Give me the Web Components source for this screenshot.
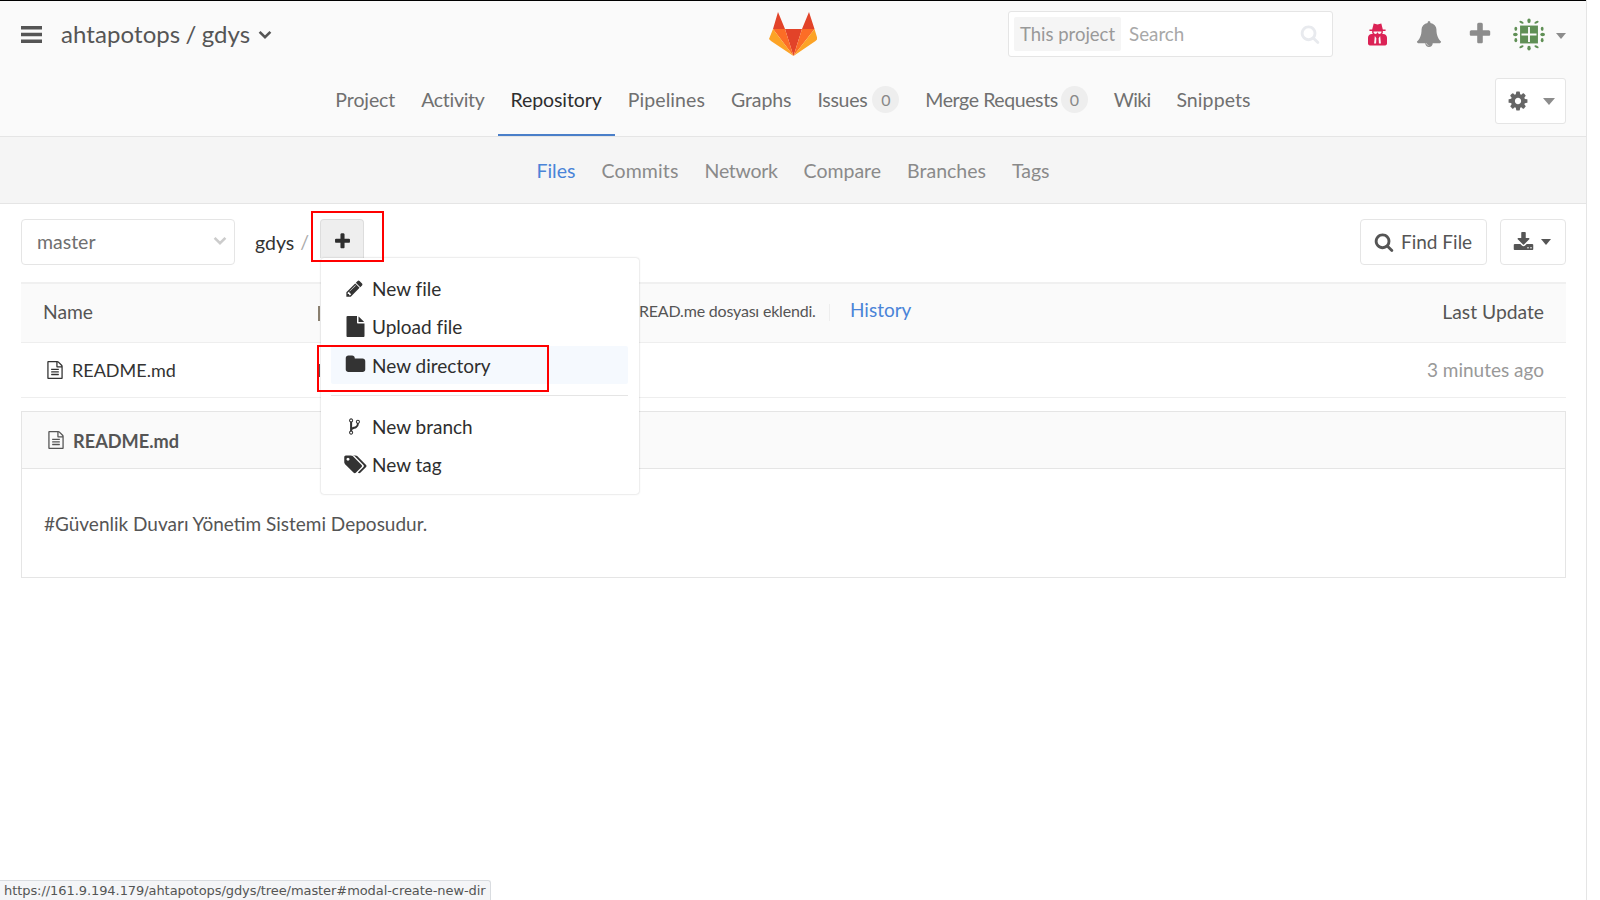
<!DOCTYPE html>
<html lang="tr"><head><meta charset="utf-8"><title>gdys</title>
<style>
html,body{margin:0;padding:0;background:#fff}
body{font-family:Lato,"Liberation Sans",sans-serif;height:900px;overflow:hidden;position:relative}
</style></head><body>
<gl-page>
  <gl-topbar></gl-topbar>
  <gl-tabs></gl-tabs>
  <gl-subtabs></gl-subtabs>
  <gl-toolbar></gl-toolbar>
  <gl-filetable></gl-filetable>
  <gl-readme></gl-readme>
  <gl-menu slot="over"></gl-menu>
  <gl-mark slot="over" style="left:311px;top:211px;width:73px;height:51px"></gl-mark>
  <gl-mark slot="over" style="left:317px;top:345px;width:232px;height:47px"></gl-mark>
</gl-page>
<gl-status>https://161.9.194.179/ahtapotops/gdys/tree/master#modal-create-new-dir</gl-status>
<script>
const P={
bars:['0 0 21 17','M0 0h21v3.4H0zM0 6.8h21v3.4H0zM0 13.6h21V17H0z'],
plus:['0 0 1792 1792','M1600 736v192q0 40-28 68t-68 28h-416v416q0 40-28 68t-68 28h-192q-40 0-68-28t-28-68v-416h-416q-40 0-68-28t-28-68v-192q0-40 28-68t68-28h416v-416q0-40 28-68t68-28h192q40 0 68 28t28 68v416h416q40 0 68 28t28 68z'],
search:['0 0 1792 1792','M1216 832q0-185-131.5-316.5t-316.5-131.5-316.5 131.5-131.5 316.5 131.5 316.5 316.5 131.5 316.5-131.5 131.5-316.5zm512 832q0 52-38 90t-90 38q-54 0-90-38l-343-342q-179 124-399 124-143 0-273.5-55.5t-225-150-150-225-55.5-273.5 55.5-273.5 150-225 225-150 273.5-55.5 273.5 55.5 225 150 150 225 55.5 273.5q0 220-124 399l343 343q37 37 37 90z'],
bell:['0 0 1792 1792','M912 1696q0-16-16-16-59 0-101.5-42.5t-42.5-101.5q0-16-16-16t-16 16q0 73 51.5 124.5t124.5 51.5q16 0 16-16zm816-288q0 52-38 90t-90 38h-448q0 106-75 181t-181 75-181-75-75-181h-448q-52 0-90-38t-38-90q50-42 91-88t85-119.5 74.5-158.5 50-206 19.5-260q0-152 117-282.5t307-158.5q-8-19-8-39 0-40 28-68t68-28 68 28 28 68q0 20-8 39 190 28 307 158.5t117 282.5q0 139 19.5 260t50 206 74.5 158.5 85 119.5 91 88z'],
cog:['0 0 1792 1792','M1152 896q0-106-75-181t-181-75-181 75-75 181 75 181 181 75 181-75 75-181zm512-109v222q0 12-8 23t-20 13l-185 28q-19 54-39 91 35 50 107 138 10 12 10 25t-9 23q-27 37-99 108t-94 71q-12 0-26-9l-138-108q-44 23-91 38-16 136-29 186-7 28-36 28h-222q-14 0-24.5-8.5t-11.5-21.5l-28-184q-49-16-90-37l-141 107q-10 9-25 9-14 0-25-11-126-114-165-168-7-10-7-23 0-12 8-23 15-21 51-66.5t54-70.5q-27-50-41-99l-183-27q-13-2-21-12.5t-8-23.5v-222q0-12 8-23t19-13l186-28q14-46 39-92-40-57-107-138-10-12-10-24 0-10 9-23 26-36 98.5-107.5t94.5-71.5q13 0 26 10l138 107q44-23 91-38 16-136 29-186 7-28 36-28h222q14 0 24.5 8.5t11.5 21.5l28 184q49 16 90 37l142-107q9-9 24-9 13 0 25 10 129 119 165 170 7 8 7 22 0 12-8 23-15 21-51 66.5t-54 70.5q26 50 41 98l183 28q13 2 21 12.5t8 23.5z'],
pencil:['0 0 1792 1792','M491 1536l91-91-235-235-91 91v107h128v128h107zm523-928q0-22-22-22-10 0-17 7l-542 542q-7 7-7 17 0 22 22 22 10 0 17-7l542-542q7-7 7-17zm-54-192l416 416-832 832h-416v-416zm683 96q0 53-37 90l-166 166-416-416 166-165q36-38 90-38 53 0 91 38l235 234q37 39 37 91z'],
file:['0 0 1792 1792','M1152 512v-472q22 14 36 28l408 408q14 14 28 36h-472zm-128 32q0 40 28 68t68 28h544v1056q0 40-28 68t-68 28h-1344q-40 0-68-28t-28-68v-1600q0-40 28-68t68-28h800v544z'],
folder:['0 0 1792 1792','M1728 608v704q0 92-66 158t-158 66h-1216q-92 0-158-66t-66-158v-960q0-92 66-158t158-66h320q92 0 158 66t66 158v32h672q92 0 158 66t66 158z'],
fork:['0 0 1792 1792','M672 1472q0-40-28-68t-68-28-68 28-28 68 28 68 68 28 68-28 28-68zm0-1152q0-40-28-68t-68-28-68 28-28 68 28 68 68 28 68-28 28-68zm640 128q0-40-28-68t-68-28-68 28-28 68 28 68 68 28 68-28 28-68zm96 0q0 52-26 96.5t-70 69.5q-2 287-226 414-67 38-203 81-128 40-169.5 71t-41.5 100v26q44 25 70 69.5t26 96.5q0 80-56 136t-136 56-136-56-56-136q0-52 26-96.5t70-69.5v-820q-44-25-70-69.5t-26-96.5q0-80 56-136t136-56 136 56 56 136q0 52-26 96.5t-70 69.5v497q54-26 154-57 55-17 87.5-29.5t70.5-31 59-39.5 40.5-51 28-69.5 8.5-91.5q-44-25-70-69.5t-26-96.5q0-80 56-136t136-56 136 56 56 136z'],
tags:['0 0 1920 1792','M448 448q0-53-37.5-90.5t-90.5-37.5-90.5 37.5-37.5 90.5 37.5 90.5 90.5 37.5 90.5-37.5 37.5-90.5zm1067 576q0 53-37 90l-491 492q-39 37-91 37-53 0-90-37l-715-716q-38-37-64.5-101t-26.5-117v-416q0-52 38-90t90-38h416q53 0 117 26.5t102 64.5l715 714q37 39 37 91zm384 0q0 53-37 90l-491 492q-39 37-91 37-36 0-59-14t-53-45l470-470q37-37 37-90 0-52-37-91l-715-714q-38-38-102-64.5t-117-26.5h224q53 0 117 26.5t102 64.5l715 714q37 39 37 91z'],
filetext:['0 0 1792 1792','M1596 380q28 28 48 76t20 88v1152q0 40-28 68t-68 28h-1344q-40 0-68-28t-28-68v-1600q0-40 28-68t68-28h896q40 0 88 20t76 48zm-444-244v376h376q-10-29-22-41l-313-313q-12-12-41-22zm384 1528v-1024h-416q-40 0-68-28t-28-68v-416h-768v1536h1280zm-1024-864q0-14 9-23t23-9h704q14 0 23 9t9 23v64q0 14-9 23t-23 9h-704q-14 0-23-9t-9-23v-64zm736 224q14 0 23 9t9 23v64q0 14-9 23t-23 9h-704q-14 0-23-9t-9-23v-64q0-14 9-23t23-9h704zm0 256q14 0 23 9t9 23v64q0 14-9 23t-23 9h-704q-14 0-23-9t-9-23v-64q0-14 9-23t23-9h704z'],
download:['0 0 1792 1792','M1344 1344q0-26-19-45t-45-19-45 19-19 45 19 45 45 19 45-19 19-45zm256 0q0-26-19-45t-45-19-45 19-19 45 19 45 45 19 45-19 19-45zm128-224v320q0 40-28 68t-68 28h-1472q-40 0-68-28t-28-68v-320q0-40 28-68t68-28h465l135 136q58 56 136 56t136-56l136-136h464q40 0 68 28t28 68zm-325-569q17 41-14 70l-448 448q-18 19-45 19t-45-19l-448-448q-31-29-14-70 17-39 59-39h256v-448q0-26 19-45t45-19h256q26 0 45 19t19 45v448h256q42 0 59 39z'],
chev:['0 0 14 10','M1.6 1.8 7 7.2l5.4-5.4','s'],
caret:['0 0 12 7','M0 0h12L6 7z'],
secret:['0 0 20 24','M6 1 10 2l4-1 1.600 6.200H18.500v1.600H15.600c.3 1 .1 2.200-.6 3.200h1c2.200 0 4 1.800 4 4V22c0 1-.8 2-2 2H2c-1.200 0-2-1-2-2v-6c0-2.200 1.800-4 4-4h1c-.7-1-.9-2.200-.6-3.200H1.500V7.200h2.900zM5.800 9.400c-.2 1.600.9 2.500 2.200 2.500 1.100 0 1.500-.8 1.600-1.400h.8c.1.600.5 1.400 1.600 1.400 1.300 0 2.400-.9 2.200-2.500zM7.200 14 6.400 22h2.100l.3-5.500zM12.800 14l-1.600 2.500.3 5.500h2.100z']
};
function icon(n,w,h,c,extra){const p=P[n];const s=p[2]==='s';
 return `<svg viewBox="${p[0]}" width="${w}" height="${h}" style="display:block;flex:none;${extra||''}" aria-hidden="true"><path d="${p[1]}" ${s?`fill="none" stroke="${c}" stroke-width="2.6"`:`fill="${c}"`}/></svg>`}
function def(name,css,html){customElements.define(name,class extends HTMLElement{
 constructor(){super();const r=this.attachShadow({mode:'open'});r.innerHTML=`<style>${css}</style>${html}`}})}

def('gl-page',`:host{display:block;width:1586px;height:900px;border-right:1px solid #e5e5e5;box-sizing:content-box;position:relative;overflow:hidden;color:#2e2e2e;font-size:19.5px}`,`<slot></slot><slot name="over"></slot>`);

const avatar=`<svg width="32" height="33" viewBox="0 0 34 34" style="display:block;flex:none" aria-hidden="true"><path fill="#5f8f55" d="M7.500 7.500h19v19h-19z"/><path fill="#fbfbfb" d="M16 9h2v16h-2zM9 16h16v2H9z"/><g fill="#5f8f55"><ellipse cx="17" cy="2.500" rx="1.800" ry="2.500"/><ellipse cx="17" cy="31.500" rx="1.800" ry="2.500"/><ellipse cx="2.500" cy="17" rx="2.500" ry="1.800"/><ellipse cx="31.500" cy="17" rx="2.500" ry="1.800"/><ellipse cx="3" cy="11" rx="1.500" ry="2.200"/><ellipse cx="31" cy="11" rx="1.500" ry="2.200"/><ellipse cx="3" cy="23" rx="1.500" ry="2.200"/><ellipse cx="31" cy="23" rx="1.500" ry="2.200"/><ellipse cx="9" cy="4" rx="2.400" ry="1.200" transform="rotate(25 9 4)"/><ellipse cx="25" cy="4" rx="2.400" ry="1.200" transform="rotate(-25 25 4)"/><ellipse cx="9" cy="30" rx="2.400" ry="1.200" transform="rotate(-25 9 30)"/><ellipse cx="25" cy="30" rx="2.400" ry="1.200" transform="rotate(25 25 30)"/></g></svg>`;
const logo=`<svg width="48" height="44" viewBox="769 12 48 44" style="display:block;margin-top:-2px" aria-hidden="true"><path fill="#e24329" d="M785 29h17l-8.500 27zM778 12l7 17h-12zM809 12l5.500 17H802z"/><path fill="#fc6d26" d="M773 29h12l8.500 27zM802 29h12.500L793.500 56z"/><path fill="#fca326" d="M773 29l-4 10 2 2 22.500 15zM814.500 29l3 10-2 2L793.500 56z"/></svg>`;

def('gl-topbar',`:host{display:flex;align-items:center;height:67px;border-top:1px solid #000;background:#fafafa;box-sizing:content-box;position:relative}
.title{font-size:24px;color:#555;margin-left:19px;white-space:nowrap;word-spacing:-1px;letter-spacing:.08px;padding-bottom:2px}
.l{display:flex;align-items:center;flex:none;width:748px;padding-left:21px;padding-bottom:1px;box-sizing:content-box}
.chev{margin-left:8px;margin-top:2px}
.logo{flex:none;width:48px}
.r{flex:none;display:flex;align-items:center;padding-left:191px}
.search{width:325px;height:46px;box-sizing:border-box;border:1px solid #e5e5e5;border-radius:3px;background:#fff;display:flex;align-items:center;padding:0 5px;color:#b0b0b0}
.chip{background:#f5f5f5;border-radius:2px;height:34px;width:107px;line-height:34px;text-align:center;color:#999;white-space:nowrap;box-sizing:border-box;font-size:18.500px}
.ph{margin-left:8px;flex:1;color:#a8a8a8;font-size:18.800px;padding-bottom:1px}
.r>svg{flex:none}`,
`<div class="l">${icon('bars',21,17,'#555')}<span class="title">ahtapotops / gdys</span><span class="chev">${icon('chev',14,10,'#555')}</span></div>
<div class="logo">${logo}</div>
<div class="r" style="padding-bottom:1px">
<div class="search"><span class="chip">This project</span><span class="ph">Search</span>${icon('search',20,20,'#e8eaee','margin-right:7px')}</div>
${icon('secret',19,24,'#db2255','margin-left:35px')}${icon('bell',26,26,'#8c8c8c','margin-left:29px')}${icon('plus',26,26,'#8c8c8c','margin-left:25px')}<span style="margin-left:20px">${avatar}</span>${icon('caret',10,6,'#8c8c8c','margin-left:11px;margin-top:3px')}</div>`);

def('gl-tabs',`:host{display:grid;grid-template-columns:1fr auto 1fr;height:68px;background:#fafafa;border-bottom:1px solid #e5e5e5;box-sizing:content-box;align-items:stretch}
nav{grid-column:2;display:flex;font-size:19.5px;color:#707070}
a{display:flex;align-items:center;padding:0 13px 3px;border-bottom:2px solid transparent;box-sizing:content-box;height:63px;white-space:nowrap;letter-spacing:-.1px}
a.on{color:#2e2e2e;border-bottom-color:#4a7fc9}
b{font-weight:400;display:inline-block;width:27px;height:27px;line-height:27px;text-align:center;border-radius:50%;background:#eee;color:#888;font-size:16px;margin-left:5px;letter-spacing:0}
.g{grid-column:3;justify-self:end;margin-right:20px;margin-top:10px;width:71px;height:46px;box-sizing:border-box;border:1px solid #e5e5e5;border-radius:3px;background:#fff;display:flex;align-items:center;gap:14px;padding-left:11px}`,
`<nav><a>Project</a><a style="letter-spacing:-.3px">Activity</a><a class="on">Repository</a><a style="letter-spacing:.1px">Pipelines</a><a>Graphs</a><a style="letter-spacing:-.3px">Issues<b>0</b></a><a style="letter-spacing:-.4px">Merge Requests<b style="margin-left:3px">0</b></a><a style="letter-spacing:-.7px">Wiki</a><a style="letter-spacing:.1px">Snippets</a></nav>
<div class="g">${icon('cog',22,22,'#666')}${icon('caret',12,7,'#8c8c8c')}</div>`);

def('gl-subtabs',`:host{display:flex;justify-content:center;height:66px;background:#f5f5f5;border-bottom:1px solid #e5e5e5;box-sizing:content-box;font-size:19.5px;color:#8a8a8a}
a{display:flex;align-items:center;padding:0 13px;white-space:nowrap}
a.on{color:#4a84d8}`,`<a class="on">Files</a><a style="letter-spacing:.15px">Commits</a><a style="letter-spacing:-.3px">Network</a><a>Compare</a><a>Branches</a><a>Tags</a>`);

def('gl-toolbar',`:host{display:flex;align-items:flex-start;padding:15px 20px 0 21px;height:77px;box-sizing:border-box;font-size:19.5px}
.sel{width:214px;height:46px;box-sizing:border-box;border:1px solid #e5e5e5;border-radius:4px;display:flex;align-items:center;padding:0 7px 2px 15px;justify-content:space-between;color:#707070}
.crumb{margin-left:20px;line-height:47px;color:#333}
.sl{margin-left:6px;line-height:46px;color:#aaa}
.add{margin-left:11px;width:44px;height:39px;box-sizing:border-box;background:#eee;border:1px solid #ddd;border-bottom:0;border-radius:4px 4px 0 0;display:flex;align-items:center;justify-content:center;padding-top:4px}
.sp{flex:1}
.btn{height:46px;box-sizing:border-box;border:1px solid #e5e5e5;border-radius:4px;display:flex;align-items:center;color:#555;font-size:19px}
.btn span{padding-bottom:2px}
.find{width:127px;padding-left:13px;gap:7px}
.dl{width:66px;margin-left:13px;padding-left:12px;gap:7px}`,
`<div class="sel"><span>master</span>${icon('chev',14,10,'#ccc')}</div><span class="crumb">gdys</span><span class="sl">/</span>
<div class="add">${icon('plus',19,19,'#2e2e2e')}</div><div class="sp"></div>
<div class="btn find">${icon('search',20,20,'#555')}<span>Find File</span></div>
<div class="btn dl">${icon('download',21,21,'#555')}${icon('caret',10,6,'#555')}</div>`);

def('gl-filetable',`:host{display:block;margin:1px 20px 0 21px;font-size:19.3px}
.h,.r{display:flex;align-items:center;position:relative;padding:0 22px}
.h{background:#fafafa;border-top:2px solid #f0f0f0;border-bottom:1px solid #eee;color:#555;padding-bottom:3px;box-sizing:content-box;height:55px}
.r{height:55px;box-sizing:border-box;border-bottom:1px solid #eee;padding-left:25px;padding-right:22px}
.msg{position:absolute;left:618px;top:17px;font-size:16px;color:#555;letter-spacing:-.2px;white-space:nowrap}
.hist{position:absolute;left:829px;top:14px;color:#4a84d8;font-size:19px}
.sep{position:absolute;left:808px;top:20px;height:17px;border-left:1px solid #eee}
.end{margin-left:auto;white-space:nowrap}
.t{margin-left:8px;color:#333;font-size:18px}
.m{position:absolute;left:297px;width:2px;background:#8a8070}
.ago{color:#999;font-size:19px;padding-bottom:2px}`,
`<div class="h"><span>Name</span><i class="m" style="top:22px;height:15px"></i><span class="msg">READ.me dosyası eklendi.</span><i class="sep"></i><span class="hist">History</span><span class="end">Last Update</span></div>
<div class="r">${icon('filetext',18,20,'#333')}<span class="t">README.md</span><i class="m" style="top:21px;height:13px;background:#555"></i><span class="end ago">3 minutes ago</span></div>`);

def('gl-readme',`:host{display:block;margin:13px 20px 0 21px;border:1px solid #e5e5e5;height:167px;box-sizing:border-box;font-size:19px}
.h{height:56px;background:#fafafa;border-bottom:1px solid #e5e5e5;display:flex;align-items:center;padding-left:25px;color:#555;font-weight:700;gap:8px;font-size:18.2px}
.h span{padding-top:1px}
.b{padding:43px 22px 0;color:#555;line-height:24px}`,
`<div class="h">${icon('filetext',18,20,'#555')}<span>README.md</span></div><div class="b">#Güvenlik Duvarı Yönetim Sistemi Deposudur.</div>`);

def('gl-menu',`:host{position:absolute;left:321px;top:258px;width:318px;height:236px;box-sizing:border-box;background:#fff;border-radius:3px;box-shadow:0 0 2px rgba(0,0,0,.25);padding:12px 11px 0 10px;font-size:19px;color:#2e2e2e}
.i{height:38px;box-sizing:border-box;padding-bottom:2px;display:flex;align-items:center;padding-left:14px;white-space:nowrap;border-radius:2px}
.i.on{background:#f5f9fe;padding-bottom:0}
.ic{width:27px;flex:none;display:flex;justify-content:flex-start}
hr{margin:11px 0 12px;border:0;border-top:1px solid #e5e5e5}`,
`<div class="i"><span class="ic">${icon('pencil',19,19,'#333')}</span>New file</div>
<div class="i"><span class="ic">${icon('file',21,21,'#333')}</span>Upload file</div>
<div class="i on"><span class="ic">${icon('folder',21,21,'#333','margin-top:-2px')}</span>New directory</div><hr>
<div class="i"><span class="ic">${icon('fork',19,19,'#333')}</span>New branch</div>
<div class="i"><span class="ic">${icon('tags',23,21,'#333','margin-left:-1px')}</span>New tag</div>`);

def('gl-mark',`:host{position:absolute;display:block;box-sizing:border-box;border:2px solid #f00;pointer-events:none}`,``);

def('gl-status',`:host{position:absolute;left:0;bottom:0;height:19px;padding:0 4px;background:#f4f5f7;border-top:1px solid #d9dce0;border-right:1px solid #d9dce0;border-top-right-radius:3px;font:13px/19px "DejaVu Sans",sans-serif;letter-spacing:-.07px;color:#555;white-space:nowrap}`,`<slot></slot>`);
</script>
</body></html>
